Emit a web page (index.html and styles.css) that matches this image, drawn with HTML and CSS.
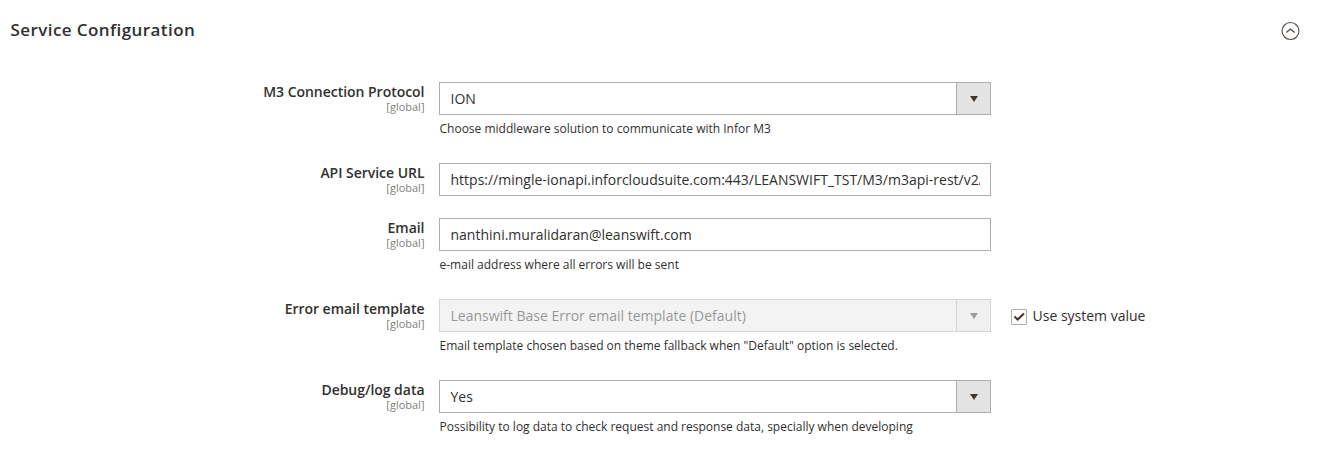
FILE: index.html
```html
<!DOCTYPE html>
<html lang="en">
<head>
<meta charset="utf-8">
<title>Service Configuration</title>
<link rel="stylesheet" href="styles.css">
</head>
<body>
<section class="section">
  <header class="section-head">
    <h1>Service Configuration</h1>
    <svg class="collapse" width="20" height="20" viewBox="0 0 20 20" fill="none" stroke="#514943"><circle cx="9.5" cy="10" r="8.5" stroke-width="1.1"/><path d="M5.3 11.5 9.5 8l4.2 3.5" stroke-width="1.3"/></svg>
  </header>
  <div class="field">
    <div class="label"><b>M3 Connection Protocol</b><span>[global]</span></div>
    <div class="control">
      <div class="box"><span class="value">ION</span><span class="arrow"><i></i></span></div>
      <p class="note">Choose middleware solution to communicate with Infor M3</p>
    </div>
  </div>
  <div class="field compact">
    <div class="label"><b>API Service URL</b><span>[global]</span></div>
    <div class="control">
      <div class="box"><span class="value text">https://mingle-ionapi.inforcloudsuite.com:443/LEANSWIFT_TST/M3/m3api-rest/v2/</span></div>
    </div>
  </div>
  <div class="field">
    <div class="label"><b>Email</b><span>[global]</span></div>
    <div class="control">
      <div class="box"><span class="value text">nanthini.muralidaran@leanswift.com</span></div>
      <p class="note">e-mail address where all errors will be sent</p>
    </div>
  </div>
  <div class="field">
    <div class="label"><b>Error email template</b><span>[global]</span></div>
    <div class="control">
      <div class="box disabled"><span class="value">Leanswift Base Error email template (Default)</span><span class="arrow"><i></i></span></div>
      <p class="note">Email template chosen based on theme fallback when "Default" option is selected.</p>
    </div>
    <div class="inherit"><span class="check"><svg width="14" height="14" viewBox="0 0 14 14" fill="none" stroke="#41362f" stroke-width="2"><path d="M2.5 6.5 5.7 9.5 12 3.5"/></svg></span><span>Use system value</span></div>
  </div>
  <div class="field">
    <div class="label"><b>Debug/log data</b><span>[global]</span></div>
    <div class="control">
      <div class="box"><span class="value">Yes</span><span class="arrow"><i></i></span></div>
      <p class="note">Possibility to log data to check request and response data, specially when developing</p>
    </div>
  </div>
</section>
</body>
</html>
```

FILE: styles.css
```css
* { box-sizing: border-box; }
body { margin: 0; background: #fff; color: #303030; font-family: "Open Sans", sans-serif; font-size: 14px; }
.section { width: 1324px; height: 460px; overflow: hidden; }
.section-head { display: flex; align-items: flex-start; justify-content: space-between; height: 82px; padding: 18px 23px 0 10.5px; }
h1 { margin: 0; font-size: 17px; font-weight: 600; line-height: 24px; letter-spacing: .42px; }
.collapse { display: block; margin-top: 3px; }
.field { display: flex; height: 81px; }
.field.compact { height: 55px; }
.label { width: 424.5px; text-align: right; }
.label b { display: block; font-size: 14px; line-height: 19px; font-weight: 600; letter-spacing: -.03px; }
.label span { display: block; font-size: 11px; line-height: 13px; margin-top: -1px; color: #808080; }
.control { width: 552px; margin-left: 14.5px; }
.box { display: flex; height: 33px; border: 1px solid #adadad; background: #fff; }
.value { flex: 1; min-width: 0; padding-left: 10.5px; line-height: 31px; white-space: nowrap; overflow: hidden; }
.value.text { margin-right: 10px; }
.arrow { display: flex; width: 34px; align-items: center; justify-content: center; border-left: 1px solid #adadad; background: #e3e3e3; }
.arrow i { margin-top: 1px; border: 4px solid transparent; border-top: 6px solid #41362f; border-bottom: 0; }
.disabled { opacity: .5; background: #e9e9e9; }
.note { margin: 5px 0 0; padding-left: .5px; font-size: 12px; line-height: 17px; white-space: nowrap; }
.inherit { display: flex; align-items: center; gap: 5.5px; height: 33px; margin-left: 20px; }
.check { width: 16px; height: 16px; margin-top: 2px; border: 1px solid #adadad; border-radius: 1px; }
.check svg { display: block; }
```
